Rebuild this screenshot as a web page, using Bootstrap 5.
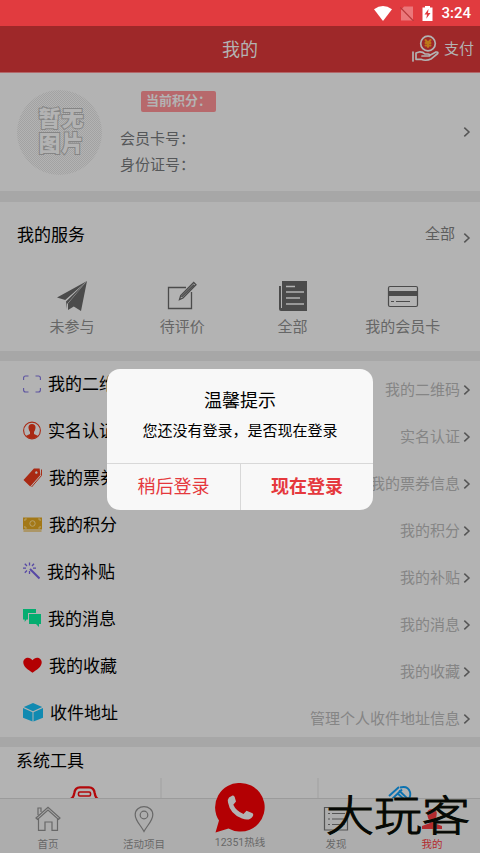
<!DOCTYPE html>
<html lang="zh-CN">
<head>
<meta charset="utf-8">
<meta name="viewport" content="width=device-width, initial-scale=1">
<title>我的</title>
<link href="https://cdn.jsdelivr.net/npm/bootstrap@5.3.0/dist/css/bootstrap.min.css" rel="stylesheet">
<style>
body{font-family:Roboto,"Noto Sans CJK SC",sans-serif;background:#b3b3b3;color:#000;font-size:15px;line-height:22px}
.screen{width:480px;height:853px}
svg{display:block;flex:none}
.status{height:26px;background:#e13b3f;color:#fff;padding-right:9px;font-size:15px;font-weight:500}
.topbar{height:47px;background:#9e2829;color:#b3b3b3;border-bottom:1px solid #b3686a}
.topbar h1{font-size:18px;line-height:22px;font-weight:400;padding-top:2px}
.pay{right:6px;top:9px;gap:5px}
.profile{height:118px;padding:17px 9px 0 17px}
.avatar{width:85px;height:85px;background:repeating-conic-gradient(#a2a2a2 0 25%,#b3b3b3 0 50%) 0 0/2px 2px;color:#b3b3b3;font-size:22px;line-height:25px;letter-spacing:1px;font-weight:900;-webkit-text-stroke:2px #858585;paint-order:stroke fill;padding:0 0 3px 4px}
.info{margin-left:18px;color:#555759}
.points{background:#b7696c;color:#b3b3b3;font-size:13px;line-height:20px;height:21px;width:75px;border-radius:2px;margin:1px 0 14px 21px;padding-left:5px;font-weight:700;white-space:nowrap}
.info p{font-size:15px;line-height:26px}
.go{margin-top:36px}
.strip{height:11px;background:#a7a7a7}
.strip.slim{height:10px}
.services{height:149px}
.services h2,.tools h2{font-size:17px;line-height:24px;font-weight:400}
.svc-head{padding:21px 9px 0 17px;height:70px}
.svc-head .all{color:#5d5d5d;gap:8px}
.svc-head .all svg{margin-top:9px}
.svc-grid{padding:0 22px 0 17px;color:#666}
.svc-grid svg{margin-bottom:5px}
.entry{height:47px;padding:0 9px 0 23px}
.entry .lbl{font-size:17px;line-height:24px;margin:11px 0 0 7px}
.entry .ico{margin-top:13px;height:20px}
.entry .hint{color:#858585;margin-top:18px;gap:3px}
.entry .hint svg{margin-top:5px}
.tools{height:52px}
.tools h2{padding:2px 0 0 16px;height:31px}
.tool{height:20px;border-right:2px solid #aaa}
.tool-a{width:162px;padding-left:7px}
.tool-b{width:157px}
.tabs{height:55px;left:0;bottom:0;background:#adadad;border-top:1px solid #9b9b9b;color:#686868;font-size:10.5px;line-height:14px}
.tabs svg{margin-bottom:4px}
.tab{padding-top:7px}
.hot{margin-top:-17px;padding-top:1px}
.hot svg{margin-bottom:3px}
.mine{color:#b32a2e}
.brand{left:326px;top:793px;width:153px;font-size:48px;line-height:48px;font-weight:300;color:#050805;white-space:nowrap;-webkit-text-stroke:1.2px #050805;text-shadow:0 0 1px #cfc78f,0 0 1px #cfc78f;transform:scaleY(.88)}
.dialog{left:107px;top:369px;width:266px;height:141px;background:#f8f8f8;border-radius:13px}
.dialog h3{font-size:18px;line-height:24px;font-weight:400;padding-top:20px}
.dialog .msg{font-size:15px;line-height:22px;margin-top:7px;height:43px}
.dialog .acts{height:47px;border-top:1px solid #d8d8d8}
.act{font-size:18px;line-height:24px;color:#e5383d}
.act.later{width:134px;border-right:1px solid #d8d8d8}
</style>
</head>
<body>
<svg width="0" height="0" class="position-absolute"><symbol id="chev" viewBox="0 0 8 12"><path d="M1.3 1.6 6 6 1.3 10.4" fill="none" stroke="#555" stroke-width="1.5"/></symbol></svg>
<div class="screen position-relative overflow-hidden">
<div class="status d-flex align-items-center justify-content-end">
<svg width="18" height="15" viewBox="0 0 18 15"><path d="M0 3.2Q9-3 18 3.2L9 15Z" fill="#fff"/></svg>
<svg width="14" height="15" viewBox="0 0 14 15" class="ms-2"><path d="M4 .5H13V14.5H1V4Z" fill="#eb777a"/><path d="M.3 1.5 13.5 15" stroke="#b8383b" stroke-width="1.2"/></svg>
<svg width="11" height="15" viewBox="0 0 11 15" class="ms-2 me-2"><path d="M3 0H8V1.5H10.5V15H.5V1.5H3Z" fill="#fff"/><path d="M6.5 3 2.5 8.5H5L4.3 12.8 8.5 7H6Z" fill="#e13b3f"/></svg>
<span>3:24</span>
</div>
<header class="topbar position-relative d-flex align-items-center justify-content-center"><h1 class="m-0">我的</h1>
<div class="pay position-absolute d-flex align-items-center">
<svg width="27" height="27" viewBox="0 0 27 27" fill="none" stroke="#b3b3b3" stroke-width="1.7" stroke-linecap="round" stroke-linejoin="round"><circle cx="16" cy="8.5" r="7.3"/><path d="m13.5 5 2.5 3 2.5-3M13.5 8h5M13.5 10.5h5M16 8v4" stroke="#bc7819" stroke-width="2"/><path d="M1 17V26M4 18 8 16.8Q11 16.8 13 19H16Q18 19.2 17.5 21H10M17.5 20.5 23.5 17.2Q26.5 16.5 25.7 18.5L19.5 23.7Q14 26.5 9 24.3L4 24.3V18"/></svg><span>支付</span></div></header>

<section class="profile d-flex">
<div class="avatar rounded-circle d-flex align-items-center justify-content-center text-center"><span>暂无<br>图片</span></div>
<div class="info flex-grow-1"><div class="points">当前积分：</div><p class="m-0">会员卡号：</p><p class="m-0">身份证号：</p></div>
<svg width="8" height="12" class="go"><use href="#chev"/></svg>
</section>
<div class="strip"></div>
<section class="services">
<div class="svc-head d-flex justify-content-between"><h2 class="m-0">我的服务</h2><div class="all d-flex"><span>全部</span><svg width="8" height="12"><use href="#chev"/></svg></div></div>
<div class="svc-grid row g-0 text-center">
<div class="col-3 d-flex flex-column align-items-center"><svg width="32" height="39" viewBox="0 0 32 39"><path d="M1 25.5 31 9 9.2 28ZM31 9 25 39 17.8 34.5 12 38V31.5ZM10 29.5 29 11 11 32V37Z" fill="#4b4b4b"/></svg><span>未参与</span></div>
<div class="col-3 d-flex flex-column align-items-center"><svg width="30" height="39" viewBox="0 0 30 39" fill="none" stroke="#4b4b4b" stroke-width="1.3"><path d="M19 15.5H1.5V36.5H24.5V20"/><path d="M12.5 27.5 13.7 23.5 26.7 10.5 29 12.8 16 26ZM14.5 25 27 12.8"/></svg><span>待评价</span></div>
<div class="col-3 d-flex flex-column align-items-center"><svg width="30" height="39" viewBox="0 0 30 39"><path d="M4 9H29V39H4ZM1 14H3V36H5V39H3Q1 39 1 37Z" fill="#4b4b4b"/><path d="M8 14.5H17M8 20H26M8 26H22M8 32H26" stroke="#b3b3b3" stroke-width="1.3"/></svg><span>全部</span></div>
<div class="col-3 d-flex flex-column align-items-center"><svg width="32" height="39" viewBox="0 0 32 39"><rect x="1.5" y="14.5" width="29" height="20" rx="1.5" fill="none" stroke="#4b4b4b" stroke-width="1.2"/><path d="M1 19H31V24H1Z" fill="#4b4b4b"/><path d="M4 29.5H7M9 29.5H23" stroke="#4b4b4b"/></svg><span>我的会员卡</span></div>
</div></section>
<div class="strip slim"></div>
<section>
<div class="entry d-flex"><svg class="ico" width="18" viewBox="0 0 18 20" fill="none" stroke="#5c53a0" stroke-width="1.1"><path d="M.6 6V4Q.6 2 2.6 2H5.5M12.5 2H15.4Q17.4 2 17.4 4V6M17.4 14V16Q17.4 18 15.4 18H12.5M5.5 18H2.6Q.6 18 .6 16V14"/></svg><span class="lbl">我的二维码</span><div class="hint d-flex ms-auto"><span>我的二维码</span><svg width="8" height="12"><use href="#chev"/></svg></div></div>
<div class="entry d-flex"><svg class="ico" width="18" viewBox="0 0 18 20"><circle cx="9" cy="9.5" r="8.4" fill="none" stroke="#a92913" stroke-width="1.1"/><path d="M9 3Q13.2 3.2 12.4 7.5 12.2 9.5 11 10.9V13L15.2 15.1Q9 20.3 2.8 15.1L7 13V10.9Q5.8 9.5 5.6 7.5 4.8 3.2 9 3Z" fill="#a92913"/></svg><span class="lbl">实名认证</span><div class="hint d-flex ms-auto"><span>实名认证</span><svg width="8" height="12"><use href="#chev"/></svg></div></div>
<div class="entry d-flex"><svg class="ico" width="19" viewBox="0 0 20 20" fill="#a92913" preserveAspectRatio="none"><path d="M.5 12 11.5 .5H17.5L18.3 7 7.6 18.5ZM14 3.2a1.3 1.3 0 1 0 .1 0Z" fill-rule="evenodd"/><path d="m9 19 10.5-11.5V1.5" fill="none" stroke="#a92913"/></svg><span class="lbl">我的票券</span><div class="hint d-flex ms-auto"><span>我的票券信息</span><svg width="8" height="12"><use href="#chev"/></svg></div></div>
<div class="entry d-flex"><svg class="ico" width="19" viewBox="0 0 20 20" preserveAspectRatio="none"><path d="M0 2.5H20V14.5H0Z" fill="#a37817"/><path d="M.5 16H19.5" stroke="#a37817"/><g fill="none" stroke="#b8a36d"><circle cx="10" cy="8.5" r="2.8"/><path d="M2 6V4H4M16 4h2v2M18 11v2h-2M4 13H2v-2"/></g></svg><span class="lbl">我的积分</span><div class="hint d-flex ms-auto"><span>我的积分</span><svg width="8" height="12"><use href="#chev"/></svg></div></div>
<div class="entry d-flex"><svg class="ico" width="17" viewBox="0 0 17 20" stroke="#5748a5" stroke-width="1.3"><path d="M6.5 .5V3.5M6.5 9V12M0 6.2H3M10 6.2H13M1.8 1.7 4 4M11 1.7 9 4M1.8 10.7 4 8.5"/><path d="m7 7 9.5 9.5" stroke-width="2"/></svg><span class="lbl">我的补贴</span><div class="hint d-flex ms-auto"><span>我的补贴</span><svg width="8" height="12"><use href="#chev"/></svg></div></div>
<div class="entry d-flex"><svg class="ico" width="18" viewBox="0 0 18 20" fill="#05ad70"><path d="M0 0H13V4H5V10.5H3.5L1.7 13V10.5H0Z"/><path d="M6 5H18V15H16V18L13 15H6Z"/></svg><span class="lbl">我的消息</span><div class="hint d-flex ms-auto"><span>我的消息</span><svg width="8" height="12"><use href="#chev"/></svg></div></div>
<div class="entry d-flex"><svg class="ico" width="19" viewBox="0 1 20 20" preserveAspectRatio="none"><path d="M10 17.8C5 14.5.3 11.7.3 7.3.3 2.4 7 .8 10 5.3 13 .8 19.7 2.4 19.7 7.3 19.7 11.7 15 14.5 10 17.8Z" fill="#b30003"/></svg><span class="lbl">我的收藏</span><div class="hint d-flex ms-auto"><span>我的收藏</span><svg width="8" height="12"><use href="#chev"/></svg></div></div>
<div class="entry d-flex"><svg class="ico" width="20" viewBox="0 .7 20 20" fill="#118ab1"><path d="M10 .8 19.2 4.7 10 9 .8 4.7ZM0 5.7 9.5 10V19.2L0 15.5ZM20 5.7 10.5 10V19.2L20 15.5Z"/></svg><span class="lbl">收件地址</span><div class="hint d-flex ms-auto"><span>管理个人收件地址信息</span><svg width="8" height="12"><use href="#chev"/></svg></div></div>
</section>
<div class="strip slim"></div>
<section class="tools overflow-hidden"><h2 class="m-0">系统工具</h2>
<div class="d-flex"><div class="tool tool-a d-flex justify-content-center"><svg width="30" height="20" viewBox="0 0 30 20" fill="none" stroke="#b3080b"><path d="M1.5 21Q4.5 20 5.3 15 6 9.3 11 9.3H20Q25 9.3 25.7 15 26.5 20 29 21" stroke-width="2.3"/><rect x="9.5" y="14" width="12" height="4" rx="1.2" stroke-width="1.6"/></svg></div><div class="tool tool-b"></div><div class="flex-grow-1 d-flex justify-content-center"><svg width="30" height="20" viewBox="0 0 30 20" fill="none" stroke="#0b72b1" stroke-width="1.9"><path d="M4 18 14 9M7 21 17 11.5M14 12.5 24 22M12 15 20 22M15 9.5Q23 7.5 25 14 26 18 23.5 21"/></svg></div></div></section>
<nav class="tabs position-absolute w-100 d-flex text-center">
<div class="tab col d-flex flex-column align-items-center"><svg width="26" height="28" viewBox="0 0 26 28" fill="none" stroke="#686868" stroke-width="1.2"><path d="M1 12 13 1.2 25 12 23.5 13.5 13 4 2.5 13.5ZM3 9V2H6V6M3.5 13V24.3H10V16H17V24.3H22.5V13"/></svg>首页</div>
<div class="tab col d-flex flex-column align-items-center"><svg width="20" height="28" viewBox="0 0 20 28" fill="none" stroke="#686868" stroke-width="1.2"><path d="M10 25.5C7 19.5 1.2 14.8 1.2 8.7 1.2-2 18.8-2 18.8 8.7 18.8 14.8 13 19.5 10 25.5Z"/><circle cx="10" cy="9" r="3.8"/></svg>活动项目</div>
<div class="hot col d-flex flex-column align-items-center"><svg width="50" height="50" viewBox="0 0 50 50"><path d="M25.5 0A24.3 24.3 0 1 1 13.5 45.5L.5 49.5 4 37.5A24.3 24.3 0 0 1 25.5 0Z" fill="#b30003"/><path d="M14 14.5 17.5 12.5Q19 12 19.7 14L21 18.5 18.3 21.8Q21 28 28.5 31L31.5 27.8 37 30Q39 31 37.8 33.2 34.5 38.5 27 35.5 15 31 13 19.5 12.5 16 14 14.5Z" fill="#b3b3b3"/></svg><span>12351热线</span></div>
<div class="tab col d-flex flex-column align-items-center"><svg width="26" height="28" viewBox="0 0 26 28" fill="none" stroke="#555" stroke-width="1.2"><path d="M1.5 1.5H24.5V24H1.5ZM5 7.5h2M9 7.5h13M5 13h2M9 13h13M5 18.5h2M9 18.5h13"/></svg>发现</div>
<div class="tab mine col d-flex flex-column align-items-center"><svg width="22" height="28" viewBox="0 0 22 28"><path d="M11 3Q17 3 15.5 10 14.8 14 13 15V17L21 20V23H1V20L9 17V15Q7.2 14 6.5 10 5 3 11 3Z" fill="#b32a2e"/></svg>我的</div>
</nav>
<div class="brand position-absolute">大玩客</div>
<div class="dialog position-absolute text-center" role="dialog"><h3 class="m-0">温馨提示</h3><div class="msg">您还没有登录，是否现在登录</div><div class="acts d-flex"><div class="act later d-flex align-items-center justify-content-center">稍后登录</div><div class="act flex-grow-1 fw-bold d-flex align-items-center justify-content-center">现在登录</div></div></div>
</div>
<script src="https://cdn.jsdelivr.net/npm/bootstrap@5.3.0/dist/js/bootstrap.bundle.min.js"></script>
</body>
</html>
